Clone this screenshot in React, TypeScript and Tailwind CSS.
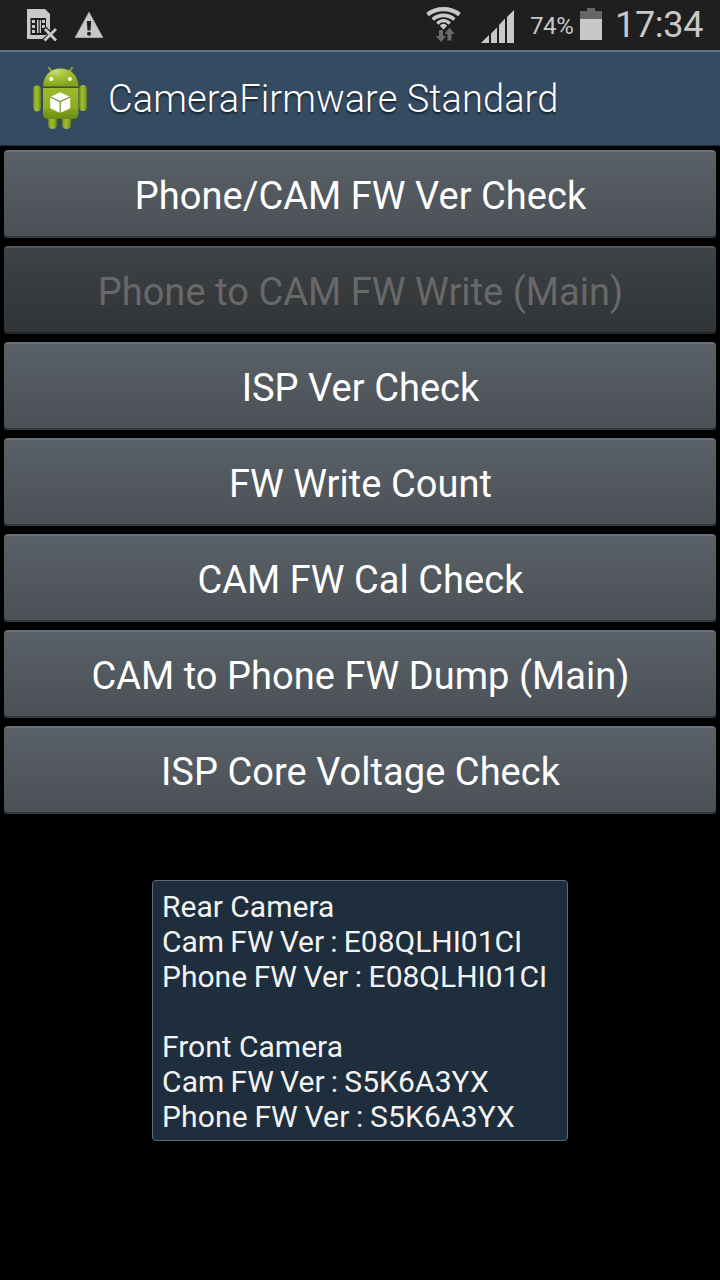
import clsx from "clsx";

const actions = [
  { label: "Phone/CAM FW Ver Check" },
  { label: "Phone to CAM FW Write (Main)", disabled: true },
  { label: "ISP Ver Check" },
  { label: "FW Write Count" },
  { label: "CAM FW Cal Check" },
  { label: "CAM to Phone FW Dump (Main)" },
  { label: "ISP Core Voltage Check" },
];

const info = [
  { text: "Rear Camera" },
  { text: "Cam FW Ver : E08QLHI01CI", style: "[word-spacing:-1.300px]" },
  { text: "Phone FW Ver : E08QLHI01CI", style: "[word-spacing:-0.8px]" },
  { text: "" },
  { text: "Front Camera" },
  { text: "Cam FW Ver : S5K6A3YX", style: "tracking-[0.1px] [word-spacing:-1.5px]" },
  { text: "Phone FW Ver : S5K6A3YX", style: "tracking-[0.15px] [word-spacing:-1px]" },
];

function SimIcon() {
  return (
    <svg width="32" height="34" viewBox="0 0 32 34" className="shrink-0">
      <path d="M1 1h18l5 5v25H1z" fill="#c8c8c8" />
      <path d="M4.500 10H20v17H4.500z" fill="#1f1f1f" />
      <path
        d="M6 12h3v3H6zM6 17h3v3H6zM6 22h3v3H6zM16 12h3v3h-3zM16 17h3v3h-3zM11 12h1.500v13H11zM13.700 12H15v13h-1.300z"
        fill="#c8c8c8"
      />
      <path d="M18 20l13 13M31 20L18 33" stroke="#1f1f1f" strokeWidth="5" />
      <path d="M19 21l11 11.500M30 21L18.500 32.500" stroke="#c8c8c8" strokeWidth="2.800" />
    </svg>
  );
}

function WarningIcon() {
  return (
    <svg width="30" height="28" viewBox="0 0 30 28" className="shrink-0">
      <path d="M15 1.200L28.800 26.500H1.200z" fill="#c8c8c8" stroke="#c8c8c8" strokeLinejoin="round" strokeWidth="0.600" />
      <path d="M12.800 10h4.400l-.7 9.500h-3z" fill="#1f1f1f" />
      <circle cx="15" cy="22.700" r="2" fill="#1f1f1f" />
    </svg>
  );
}

function WifiIcon() {
  return (
    <svg width="36" height="36" viewBox="0 0 36 36" className="shrink-0">
      <g fill="none" stroke="#c8c8c8">
        <path d="M1.500 8.500C11 1.300 24 1.300 33.500 8.500" strokeWidth="4.300" />
        <path d="M6.700 13.500C12.500 8 22.500 8 28.300 13.500" strokeWidth="3.600" />
        <path d="M11.300 17.600c3.500-4 8.900-4 12.400 0" strokeWidth="3.200" />
      </g>
      <path d="M13.800 19.700q3.700-4 7.400 0L17.500 23.500z" fill="#c8c8c8" />
      <path d="M13 24h4v6h3l-5 6-5-6h3z" fill="#6b6b6b" />
      <path d="M21.500 34.500v-6.500h-3l5-6.500 5 6.500h-3v6.500z" fill="#6b6b6b" />
    </svg>
  );
}

function SignalIcon() {
  return (
    <svg width="33" height="34" viewBox="0 0 33 34" className="shrink-0">
      <path
        d="M0 34l8-8v8zM10 24.500l6-6V34h-6zM18 16l6-6.500V34h-6zM26 8l7-7v33h-7z"
        fill="#c8c8c8"
      />
    </svg>
  );
}

function BatteryIcon() {
  return (
    <svg width="22" height="32" viewBox="0 0 22 32" className="shrink-0">
      <path d="M7 0h8v3h7v8H0V3h7z" fill="#666" />
      <path d="M0 11h22v21H0z" fill="#c8c8c8" />
    </svg>
  );
}

function AndroidIcon() {
  return (
    <svg width="56" height="64" viewBox="0 0 56 64" className="shrink-0">
      <defs>
        <linearGradient id="body" x1="0" y1="0" x2="0" y2="1">
          <stop offset="0" stopColor="#9dba2c" />
          <stop offset="0.6" stopColor="#8fae22" />
          <stop offset="1" stopColor="#6a8a12" />
        </linearGradient>
        <radialGradient id="head" cx="0.35" cy="0.15" r="0.8">
          <stop offset="0" stopColor="#c9dd73" />
          <stop offset="0.45" stopColor="#a5c234" />
          <stop offset="1" stopColor="#86a51f" />
        </radialGradient>
        <linearGradient id="limb" x1="0" y1="0" x2="1" y2="0">
          <stop offset="0" stopColor="#7c9b1c" />
          <stop offset="0.45" stopColor="#a0bd33" />
          <stop offset="1" stopColor="#728f16" />
        </linearGradient>
      </defs>
      <path d="M19 5l-3.500-5M36 5l3.500-5" stroke="#8dab27" strokeWidth="1.800" strokeLinecap="round" />
      <rect x="15.300" y="45" width="8.500" height="17" rx="4" fill="url(#limb)" />
      <rect x="29.300" y="45" width="8.500" height="17" rx="4" fill="url(#limb)" />
      <rect x="0.300" y="18.500" width="7.500" height="26" rx="3.700" fill="url(#limb)" />
      <rect x="46.300" y="18" width="7.500" height="26" rx="3.700" fill="url(#limb)" />
      <path d="M10 21h35.500v25.500q0 5.500-6 5.500H16q-6 0-6-5.500z" fill="url(#body)" />
      <path d="M10 19.500C10.500 8 17.500 1.500 27.700 1.500S45 8 45.500 19.500z" fill="url(#head)" />
      <path d="M10 20.300h35.500" stroke="#40561a" strokeWidth="1.300" />
      <circle cx="18.300" cy="12" r="2" fill="#fff" />
      <circle cx="36.800" cy="12" r="2" fill="#fff" />
      <path d="M27.200 25.300l10 4.700v11.200l-10 4.800-10-4.800V30z" fill="#fff" />
      <path d="M17.200 30l10 4.600 10-4.600M27.200 34.600V46" fill="none" stroke="#718c22" strokeWidth="1.200" />
    </svg>
  );
}

function StatusBar() {
  return (
    <div className="flex h-[50px] bg-[#1f1f1f] pr-4 pl-[26px] text-[#c8c8c8]">
      <div className="flex gap-4 pt-2">
        <SimIcon />
        <div className="pt-[3px]">
          <WarningIcon />
        </div>
      </div>
      <div className="ml-auto flex">
        <div className="mr-[19px] pt-[6px]">
          <WifiIcon />
        </div>
        <div className="mr-4 pt-[9px]">
          <SignalIcon />
        </div>
        <span className="mr-[6px] w-11 pt-[11px] text-[24px] leading-[30px] tracking-[-0.4px] whitespace-nowrap">
          74%
        </span>
        <div className="mr-[13px] pt-2">
          <BatteryIcon />
        </div>
        <span className="w-[89px] pt-[5px] text-[36px] leading-10 tracking-[-0.3px] whitespace-nowrap">17:34</span>
      </div>
    </div>
  );
}

export default function App() {
  return (
    <div className="flex h-[1280px] w-[720px] flex-col bg-black font-['Roboto',sans-serif]">
      <StatusBar />
      <header className="flex h-24 items-center gap-[19px] border-t-2 border-b border-t-[#5b7287] border-b-[#1c2d3d] bg-[#354b61] pl-[33px]">
        <AndroidIcon />
        <h1 className="text-[38px] leading-[44px] font-light tracking-[0.07px] text-white [text-shadow:0_2px_2px_rgba(0,0,0,0.6)]">
          CameraFirmware Standard
        </h1>
      </header>

      <main className="flex flex-col items-center pt-1">
        <div className="flex w-full flex-col gap-2 px-1">
          {actions.map(({ label, disabled }) => (
            <button
              key={label}
              disabled={disabled}
              className={clsx(
                "h-[88px] rounded-[4px] border-t-2 border-b-2 bg-linear-to-b pt-1 pl-px text-[38px] leading-[48px] tracking-[0.05px] whitespace-nowrap",
                disabled
                  ? "border-t-[#505860] border-b-[#24282b] from-[#3e4245] to-[#303437] text-[#686868]"
                  : "border-t-[#68727b] border-b-[#33393e] from-[#596067] to-[#4b5156] text-white",
              )}
            >
              {label}
            </button>
          ))}
        </div>

        <div className="mt-[66px] h-[261px] w-[416px] rounded-[4px] border border-[#626b73] bg-[#1e2e3c] px-[9px] pt-[8px] text-[30px] leading-[35px] text-[#f3f3f3]">
          {info.map(({ text, style }, i) => (
            <p key={i} className={clsx("h-[35px] whitespace-nowrap", style)}>
              {text}
            </p>
          ))}
        </div>
      </main>
    </div>
  );
}
